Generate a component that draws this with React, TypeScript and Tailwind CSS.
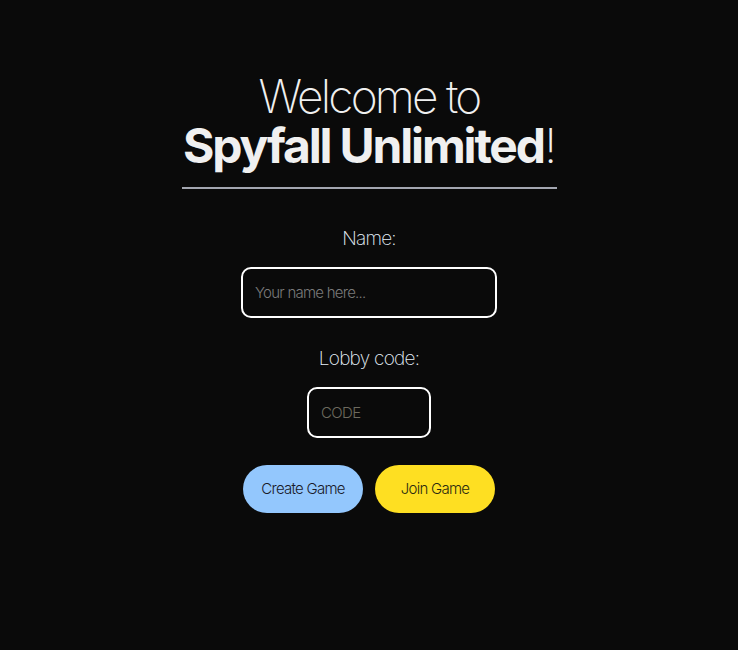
export default function App() {
  return (
    <div
      className="min-h-[650px] w-full bg-[#0a0a0a] text-[#f0f0f0] flex flex-col items-center"
      style={{ fontFamily: "Inter, 'Liberation Sans', sans-serif" }}
    >
      <div className="mt-[71px] w-[375px] text-center">
        <h1 className="leading-[50px]">
          <span className="block text-[46px] font-extralight tracking-[-0.06em]">Welcome to</span>
          <span className="block whitespace-nowrap text-[48px] font-bold tracking-[-0.045em]">
            Spyfall Unlimited<span className="font-extralight">!</span>
          </span>
        </h1>
        <div className="mt-[16px] h-[2px] bg-[#a3a6b0]" />
      </div>

      <label
        htmlFor="name"
        className="mt-[36px] text-[19px] font-extralight tracking-[-0.04em] text-[#e6f1fa]"
      >
        Name:
      </label>
      <input
        id="name"
        type="text"
        placeholder="Your name here..."
        className="mt-[13px] w-[256px] h-[51px] rounded-[10px] border-2 border-white bg-transparent px-3 text-[15px] font-light tracking-[-0.05em] text-white placeholder:text-[#7a7a7a] outline-none"
      />

      <label
        htmlFor="code"
        className="mt-[27px] text-[19px] font-extralight tracking-[-0.04em] text-[#e6f1fa]"
      >
        Lobby code:
      </label>
      <input
        id="code"
        type="text"
        placeholder="CODE"
        className="mt-[14px] w-[124px] h-[51px] rounded-[10px] border-2 border-white bg-transparent px-3 text-[15px] font-light tracking-[-0.04em] text-white placeholder:text-[#6e6a5e] outline-none"
      />

      <div className="mt-[27px] flex gap-3">
        <button className="w-[120px] h-[48px] rounded-full bg-[#93c7fd] text-[15px] font-light tracking-[-0.05em] text-[#1a1a2a]">
          Create Game
        </button>
        <button className="w-[120px] h-[48px] rounded-full bg-[#fedf22] text-[15px] font-light tracking-[-0.05em] text-[#2a2a10]">
          Join Game
        </button>
      </div>
    </div>
  )
}
